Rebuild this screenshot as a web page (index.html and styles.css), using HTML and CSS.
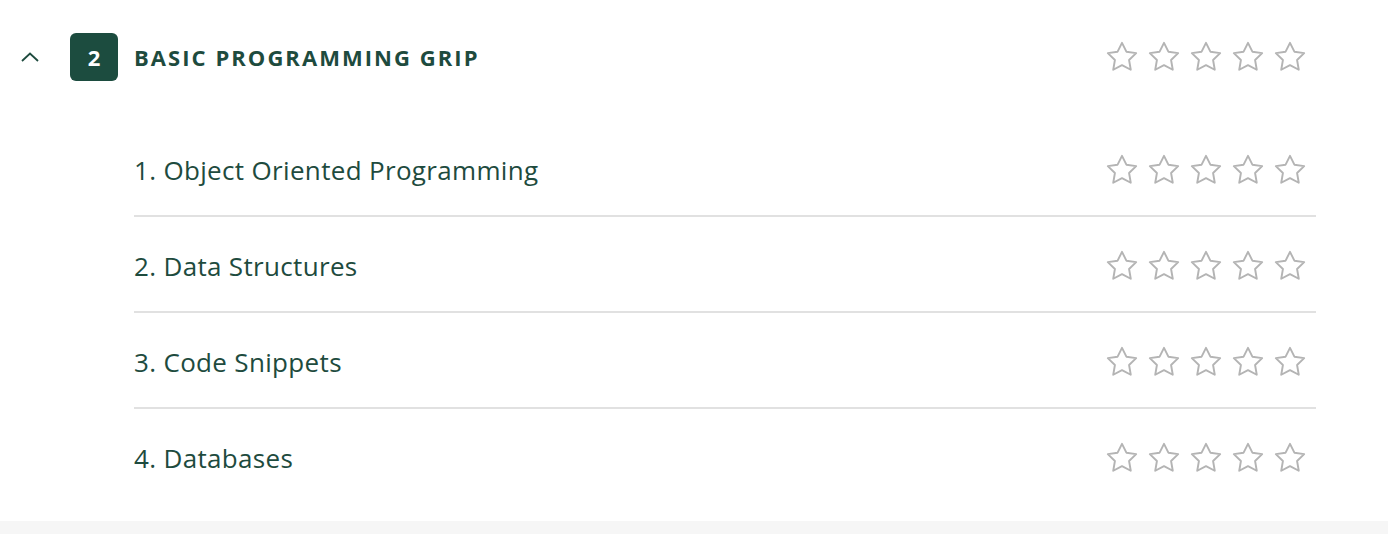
FILE: index.html
```html
<!DOCTYPE html>
<html lang="en">
<head>
    <meta charset="UTF-8">
    <meta name="viewport" content="width=device-width, initial-scale=1.0">
    <title>Basic Programming Grip</title>
    <link rel="stylesheet" href="styles.css">
</head>
<body>
    <div class="card">
        <!-- Section header -->
        <div class="section-head">
            <button class="toggle" aria-label="Collapse section">
                <svg width="18" height="10" viewBox="0 0 18 10"><polyline points="1,9 9,1.5 17,9" /></svg>
            </button>
            <span class="badge">2</span>
            <h2 class="title">Basic Programming Grip</h2>
            <div class="rating" id="sectionRating"></div>
        </div>

        <!-- Topics -->
        <ul class="topics" id="topicList"></ul>
    </div>

    <script>
        const topics = ['Object Oriented Programming', 'Data Structures', 'Code Snippets', 'Databases'];
        const topicList = document.getElementById('topicList');
        const starPath = 'M12 2l3.09 6.26L22 9.27l-5 4.87 1.18 6.88L12 17.77l-6.18 3.25L7 14.14 2 9.27l6.91-1.01L12 2z';

        function renderStars() {
            let stars = '';
            for (let i = 0; i < 5; i++) {
                stars += `<svg class="star" viewBox="0 0 24 24"><path d="${starPath}"/></svg>`;
            }
            return stars;
        }

        document.getElementById('sectionRating').innerHTML = renderStars();

        topics.forEach((name, index) => {
            const li = document.createElement('li');
            li.className = 'topic';
            li.innerHTML = `
                <span class="topic-name">${index + 1}. ${name}</span>
                <div class="rating">${renderStars()}</div>
            `;
            topicList.appendChild(li);
        });
    </script>
</body>
</html>
```

FILE: styles.css
```css
* {
    margin: 0;
    padding: 0;
    box-sizing: border-box;
}
body {
    font-family: 'Open Sans', 'Noto Sans', sans-serif;
    background-color: #f6f6f6;
    color: #1e4b3e;
}
.card {
    background-color: #ffffff;
    padding: 33px 72px 18px 21px;
}
/* Header */
.section-head {
    display: flex;
    align-items: center;
    height: 48px;
}
.toggle {
    width: 18px;
    height: 10px;
    margin-right: 31px;
    border: none;
    background: none;
    display: flex;
    cursor: pointer;
}
.toggle svg polyline {
    fill: none;
    stroke: #1e4b3e;
    stroke-width: 1.8;
}
.badge {
    width: 48px;
    height: 48px;
    border-radius: 6px;
    background-color: #1c4c3f;
    color: #ffffff;
    font-size: 22px;
    font-weight: 700;
    display: flex;
    justify-content: center;
    align-items: center;
    margin-right: 16px;
}
.title {
    flex: 1;
    font-size: 22px;
    font-weight: 700;
    text-transform: uppercase;
    letter-spacing: 2.05px;
    color: #1e4b3e;
}
/* Stars */
.rating {
    display: flex;
    gap: 8px;
    margin-right: 9px;
}
.star {
    width: 34px;
    height: 34px;
}
.star path {
    fill: none;
    stroke: #b4b4b4;
    stroke-width: 1.35;
    stroke-linejoin: round;
}
/* Topic list */
.topics {
    list-style: none;
    margin: 40px 0 0 113px;
}
.topic {
    display: flex;
    align-items: center;
    justify-content: space-between;
    height: 96px;
    padding-top: 4px;
    border-bottom: 2px solid #e1e1e1;
}
.topic:last-child {
    border-bottom: none;
    height: 94px;
}
.topic-name {
    font-size: 26px;
    letter-spacing: 0.33px;
}
```
